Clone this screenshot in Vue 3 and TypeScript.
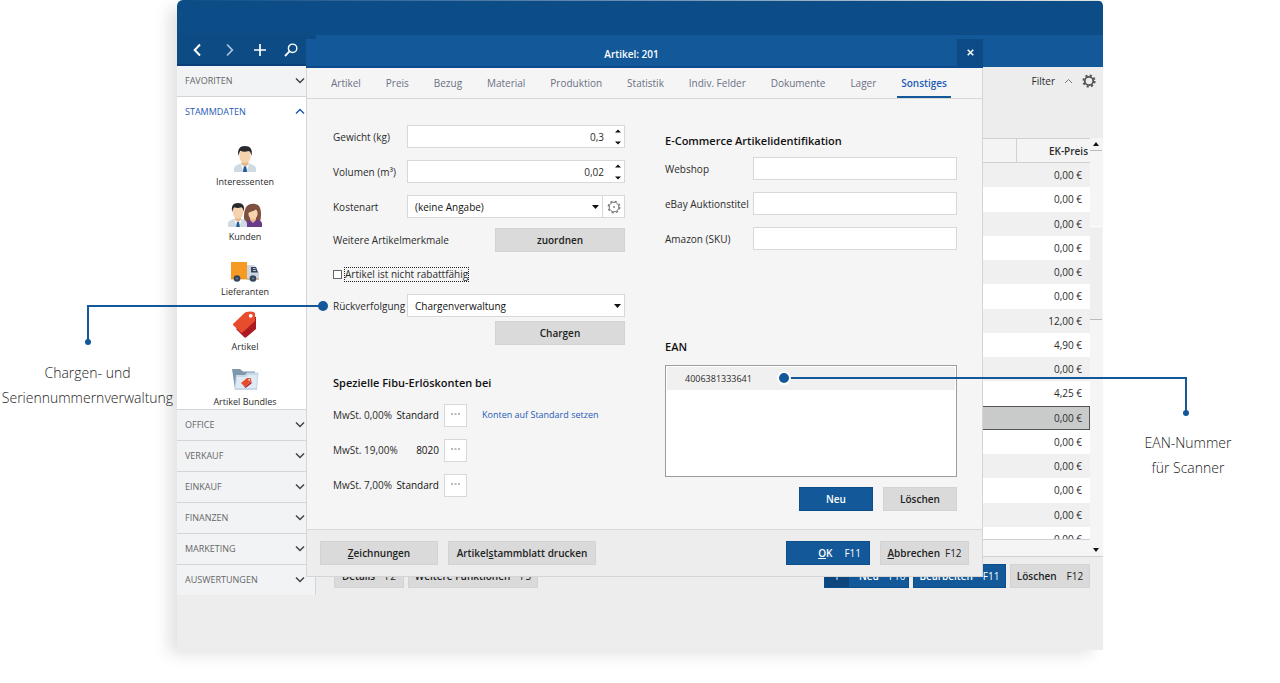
<script setup lang="ts">
import { ref } from 'vue'

interface TaxRow {
  label: string
  account: string
}

const tabs: string[] = ['Artikel', 'Preis', 'Bezug', 'Material', 'Produktion', 'Statistik', 'Indiv. Felder', 'Dokumente', 'Lager', 'Sonstiges']
const activeTab = ref('Sonstiges')
const groups: string[] = ['OFFICE', 'VERKAUF', 'EINKAUF', 'FINANZEN', 'MARKETING', 'AUSWERTUNGEN']
const prices: string[] = ['0,00', '0,00', '0,00', '0,00', '0,00', '0,00', '12,00', '4,90', '0,00', '4,25', '0,00', '0,00', '0,00', '0,00', '0,00', '0,00']
const selectedRow = 10
const taxRows: TaxRow[] = [
  { label: 'MwSt. 0,00%', account: 'Standard' },
  { label: 'MwSt. 19,00%', account: '8020' },
  { label: 'MwSt. 7,00%', account: 'Standard' },
]
const shopFields: { id: string; label: string }[] = [
  { id: 'webshop', label: 'Webshop' },
  { id: 'ebay', label: 'eBay Auktionstitel' },
  { id: 'amazon', label: 'Amazon (SKU)' },
]
const weight = ref('0,3')
const volume = ref('0,02')
const noDiscount = ref(false)
</script>

<template>
  <div class="stage">
    <div class="window">
      <header class="topbar"></header>
      <div class="columns">
        <aside class="sidebar">
          <div class="nav-tools">
            <button type="button" aria-label="Zurück"><svg width="14" height="14" viewBox="0 0 14 14"><path d="M9 1.5 3.7 7 9 12.5" stroke="#fff" stroke-width="2" fill="none" /></svg></button>
            <button type="button" aria-label="Vor"><svg width="14" height="14" viewBox="0 0 14 14"><path d="M5 1.5 10.3 7 5 12.5" stroke="#a9c2da" stroke-width="1.8" fill="none" /></svg></button>
            <button type="button" aria-label="Hinzufügen"><svg width="14" height="14" viewBox="0 0 14 14"><path d="M7 1v12M1 7h12" stroke="#fff" stroke-width="1.7" fill="none" /></svg></button>
            <button type="button" aria-label="Suchen"><svg width="14" height="14" viewBox="0 0 14 14"><circle cx="8.6" cy="5.3" r="4.2" stroke="#fff" stroke-width="1.4" fill="none" /><path d="M5.5 8.4 1 13" stroke="#fff" stroke-width="1.8" /></svg></button>
          </div>
          <button type="button" class="group">FAVORITEN
            <svg width="10" height="7" viewBox="0 0 10 7"><path d="M1 1.5 5 5.5 9 1.5" stroke="#444" stroke-width="1.5" fill="none" /></svg>
          </button>
          <section class="open-group">
            <button type="button" class="group active">STAMMDATEN
              <svg width="10" height="7" viewBox="0 0 10 7"><path d="M1 5.5 5 1.5 9 5.5" stroke="#1f5bb5" stroke-width="1.5" fill="none" /></svg>
            </button>
            <nav class="entries">
              <a href="#">
                <svg width="24" height="28" viewBox="0 0 24 28">
                  <path d="M1 27v-3c0-3 3-4.200 7-5.500h8c4 1.300 7 2.500 7 5.500v3z" fill="#cfdbe2" />
                  <path d="M8.500 15h7v4.500L12 22l-3.500-2.500z" fill="#e6b98f" />
                  <path d="M8 19l4 3-2.500 2.500zM16 19l-4 3 2.500 2.500z" fill="#fff" />
                  <path d="M10.800 21.500h2.400l.8 5.500h-4z" fill="#23599b" />
                  <ellipse cx="12" cy="11" rx="5.700" ry="7" fill="#f6d3ae" />
                  <path d="M5.500 11C4 4 7 1 12 1s8 3 6.500 10c-.6-3-1.500-4.500-3-5-3 1-6 .8-8-.2C6.500 7 6 9 5.500 11z" fill="#29292c" />
                </svg>
                <span>Interessenten</span>
              </a>
              <a href="#">
                <svg width="34" height="28" viewBox="0 0 34 28">
                  <path d="M17 22c-2-4-1-13 2-16 3-3 9-3 12 0 3 4 2 12 1 16z" fill="#80503e" />
                  <path d="M17 27v-3c0-3 3-4 5-4.500h6c3 .5 6 1.500 6 4.500v3z" fill="#6a3b8b" />
                  <path d="M22 17h6v3l-3 3-3-3z" fill="#e6b98f" />
                  <ellipse cx="25" cy="13.500" rx="4.600" ry="5.800" fill="#f6d3ae" />
                  <path d="M19.500 13.500c0-6 5-6 9-8 2 2 2.500 5 2.500 8-1-2-2-3.500-3-4-3 2-6 2-8.500 4z" fill="#80503e" />
                  <path d="M0 27v-3c0-3 3-4.200 6-5h8c3 .8 5 2 5 5v3z" fill="#cfdbe2" />
                  <path d="M7 15h6v5l-3 2-3-2z" fill="#e6b98f" />
                  <path d="M6.500 19.500l3.500 3-2 2zM13.500 19.500l-3.500 3 2 2z" fill="#fff" />
                  <path d="M9 22h2l.8 5H8.200z" fill="#23599b" />
                  <ellipse cx="10" cy="12" rx="5.200" ry="6.600" fill="#f6d3ae" />
                  <path d="M4.200 12C3 6 5 3 10 3s7 3 5.800 9c-.5-3-1.400-4.200-2.600-4.700-2.500 1-5 .8-6.900-.1C5.200 8.500 4.700 10 4.200 12z" fill="#29292c" />
                </svg>
                <span>Kunden</span>
              </a>
              <a href="#">
                <svg width="28" height="28" viewBox="0 0 28 28">
                  <path d="M16 10h7l5 7v8H16z" fill="#ccd6df" />
                  <path d="M20 12h5l2 5.500h-7z" fill="#35435c" />
                  <path d="M22 13.500h2.500M22 15.500h3" stroke="#d9e2ea" stroke-width=".8" />
                  <path d="M0 7h16v17H0z" fill="#f59b24" />
                  <path d="M0 23h28v2H0z" fill="#d8861d" opacity=".3" />
                  <circle cx="6" cy="23.500" r="3.300" fill="#35435c" /><circle cx="6" cy="23.500" r="1.100" fill="#71819b" />
                  <circle cx="22" cy="23.500" r="3.300" fill="#35435c" /><circle cx="22" cy="23.500" r="1.100" fill="#71819b" />
                </svg>
                <span>Lieferanten</span>
              </a>
              <a href="#">
                <svg width="26" height="28" viewBox="0 0 26 28">
                  <path d="M4 19 19 6l5 1v12L14 27.500q-1 .5-2-.5z" fill="#ab1a23" />
                  <path d="M1 14 13 2.500Q18 .800 22 2l1 1.500v7.500L10.500 22.500Q9.500 23 8.500 22L1 15z" fill="#e74d2d" />
                  <circle cx="18.700" cy="5.800" r="1.900" fill="#fff" />
                </svg>
                <span>Artikel</span>
              </a>
              <a href="#">
                <svg width="28" height="28" viewBox="0 0 28 28">
                  <path d="M1 4h8l3 2.500h12V24H4z" fill="#8098ae" />
                  <path d="M5 10h9l2-2.500h11.500L26 25H3.500z" fill="#c8d8e7" />
                  <path d="M6 12h9l2-2h9l-1 13H5z" fill="#dfebf4" />
                  <path d="M10 18l6-5 4 .3.200 3.200L14 22z" fill="#e74d2d" />
                  <path d="M12 20.500l2 1.500 6.500-5.500v2L14.500 23z" fill="#ab1a23" />
                  <circle cx="18.200" cy="14.900" r=".8" fill="#fff" />
                </svg>
                <span>Artikel Bundles</span>
              </a>
            </nav>
          </section>
          <button v-for="g in groups" :key="g" type="button" class="group">{{ g }}
            <svg width="10" height="7" viewBox="0 0 10 7"><path d="M1 1.500 5 5.500 9 1.500" stroke="#444" stroke-width="1.500" fill="none" /></svg>
          </button>
        </aside>

        <main class="main">
          <div class="toolbar"></div>
          <div class="filter">
            <button type="button">Filter
              <svg width="9" height="6" viewBox="0 0 9 6"><path d="M1 5 4.500 1.500 8 5" stroke="#777" stroke-width="1" fill="none" /></svg>
            </button>
            <button type="button" aria-label="Einstellungen">
              <svg width="14" height="14" viewBox="0 0 14 14"><circle cx="7" cy="7" r="5.600" fill="none" stroke="#555" stroke-width="2" stroke-dasharray="2.200 2.200" /><circle cx="7" cy="7" r="4.200" fill="none" stroke="#555" stroke-width="1.800" /></svg>
            </button>
          </div>
          <div class="list">
            <div class="list-body">
              <table>
                <thead><tr><th></th><th class="price">EK-Preis</th></tr></thead>
                <tbody>
                  <tr v-for="(p, i) in prices" :key="i" :class="{ selected: i === selectedRow }"><td></td><td class="price">{{ p }} €</td></tr>
                </tbody>
              </table>
            </div>
            <div class="scroll">
              <button type="button" class="up" aria-label="Nach oben"><svg width="6" height="4" viewBox="0 0 6 4"><path d="M0 4 3 0l3 4z" fill="#111" /></svg></button>
              <div class="thumb"></div>
              <button type="button" class="down" aria-label="Nach unten"><svg width="6" height="4" viewBox="0 0 6 4"><path d="M0 0 3 4l3-4z" fill="#111" /></svg></button>
            </div>
          </div>
          <div class="actions">
            <button type="button" class="btn details">Details <kbd>F2</kbd></button>
            <button type="button" class="btn more">Weitere Funktionen <kbd>F3</kbd></button>
            <span class="spacer"></span>
            <button type="button" class="btn blue new"><i class="plus">+</i><span>Neu</span> <kbd>F10</kbd></button>
            <button type="button" class="btn blue edit">Bearbeiten <kbd>F11</kbd></button>
            <button type="button" class="btn del">Löschen <kbd>F12</kbd></button>
          </div>
        </main>
      </div>

      <section class="dialog" role="dialog" aria-label="Artikel: 201">
        <div class="titlebar">
          <h1>Artikel: 201</h1>
          <button type="button" aria-label="Schließen"><svg width="7" height="7" viewBox="0 0 7 7"><path d="M.7.700l5.600 5.600M6.300.700.7 6.300" stroke="#fff" stroke-width="1.500" /></svg></button>
        </div>
        <div class="tabs">
          <button v-for="t in tabs" :key="t" type="button" :class="{ on: t === activeTab }" @click="activeTab = t">{{ t }}</button>
        </div>
        <div class="body">
          <div class="left">
            <div class="row">
              <label for="weight">Gewicht (kg)</label>
              <div class="box"><input id="weight" v-model="weight" class="num" type="text"><span class="spin">
                <svg width="6" height="16" viewBox="0 0 6 16"><path d="M0 3.500 3 .500l3 3zM0 12.500l3 3 3-3z" fill="#111" /></svg></span></div>
            </div>
            <div class="row">
              <label for="volume">Volumen (m³)</label>
              <div class="box"><input id="volume" v-model="volume" class="num" type="text"><span class="spin">
                <svg width="6" height="16" viewBox="0 0 6 16"><path d="M0 3.500 3 .500l3 3zM0 12.500l3 3 3-3z" fill="#111" /></svg></span></div>
            </div>
            <div class="row">
              <label for="cost">Kostenart</label>
              <div class="box">
                <div class="pick"><select id="cost"><option>(keine Angabe)</option></select><svg width="7" height="4" viewBox="0 0 7 4"><path d="M0 0h7L3.500 4z" fill="#111" /></svg></div>
                <button type="button" class="gear" aria-label="Kostenarten bearbeiten">
                  <svg width="14" height="14" viewBox="0 0 14 14"><circle cx="7" cy="7" r="4.800" fill="none" stroke="#777" stroke-width="1" /><circle cx="7" cy="7" r="5.800" fill="none" stroke="#777" stroke-width="1.200" stroke-dasharray="2.280 2.280" /><circle cx="7" cy="7" r="1" fill="#888" /></svg>
                </button>
              </div>
            </div>
            <div class="row wide">
              <span>Weitere Artikelmerkmale</span>
              <button type="button" class="btn field-btn">zuordnen</button>
            </div>
            <label class="check"><input v-model="noDiscount" type="checkbox"><span>Artikel ist nicht rabattfähig</span></label>
            <div class="row trace">
              <label for="trace">Rückverfolgung</label>
              <div class="box"><div class="pick"><select id="trace"><option>Chargenverwaltung</option></select><svg width="7" height="4" viewBox="0 0 7 4"><path d="M0 0h7L3.500 4z" fill="#111" /></svg></div></div>
            </div>
            <div class="row wide batch"><button type="button" class="btn field-btn">Chargen</button></div>
            <h2 class="accounts">Spezielle Fibu-Erlöskonten bei</h2>
            <div v-for="(r, i) in taxRows" :key="r.label" class="tax">
              <span>{{ r.label }}</span>
              <output>{{ r.account }}</output>
              <button type="button" :aria-label="'Konto wählen ' + r.label"><svg width="9" height="2" viewBox="0 0 9 2"><path d="M0 1h2M3.500 1h2M7 1h2" stroke="#777" stroke-width="1" /></svg></button>
              <a v-if="i === 0" href="#">Konten auf Standard setzen</a>
            </div>
          </div>
          <div class="right">
            <h2>E-Commerce Artikelidentifikation</h2>
            <div v-for="f in shopFields" :key="f.id" class="row shop">
              <label :for="f.id">{{ f.label }}</label>
              <div class="box"><input :id="f.id" type="text"></div>
            </div>
            <h2 class="ean">EAN</h2>
            <ul class="codes"><li>4006381333641</li></ul>
            <div class="code-actions">
              <button type="button" class="btn blue">Neu</button>
              <button type="button" class="btn">Löschen</button>
            </div>
          </div>
        </div>
        <footer>
          <button type="button" class="btn draw"><span><u>Z</u>eichnungen</span></button>
          <button type="button" class="btn print"><span>Artikel<u>s</u>tammblatt drucken</span></button>
          <span class="spacer"></span>
          <button type="button" class="btn blue ok"><span><u>O</u>K</span> <kbd>F11</kbd></button>
          <button type="button" class="btn cancel"><span><u>A</u>bbrechen</span> <kbd>F12</kbd></button>
        </footer>
      </section>
    </div>

    <div class="note note-left">
      <svg width="246" height="46" viewBox="0 0 246 46"><path d="M240 6H5v36" fill="none" stroke="#135898" stroke-width="2" /><circle cx="240" cy="6" r="5" fill="#135898" /><circle cx="5" cy="42" r="3" fill="#135898" /></svg>
      <p>Chargen- und<br>Seriennummernverwaltung</p>
    </div>
    <div class="note note-right">
      <svg width="414" height="46" viewBox="0 0 414 46"><path d="M8 8h402v34" fill="none" stroke="#135898" stroke-width="2" /><circle cx="8" cy="8" r="6" fill="#135898" stroke="#fff" stroke-width="2" /><circle cx="410" cy="43" r="3" fill="#135898" /></svg>
      <p>EAN-Nummer<br>für Scanner</p>
    </div>
  </div>
</template>

<style>
body { margin: 0; background: #fff; }
</style>

<style scoped>
* { box-sizing: border-box; }
.stage {
  position: relative;
  padding: 0 177px 33px;
  overflow: hidden;
  font: 10px/14px "Open Sans", "Noto Sans", sans-serif;
  color: #2b2b2b;
}
button, input, select { font: inherit; color: inherit; margin: 0; padding: 0; border: 0; background: none; outline: 0; }
button { display: flex; align-items: center; justify-content: center; cursor: pointer; white-space: nowrap; }
svg { display: block; flex: none; }
a { text-decoration: none; color: inherit; }
kbd { font: inherit; font-weight: 400; }
h1, h2, p, ul { margin: 0; padding: 0; }

.window {
  position: relative;
  min-height: 650px;
  background: #ededed;
  border-radius: 6px 6px 0 0;
  box-shadow: -10px 6px 16px -2px rgba(0, 0, 0, .12);
}
.topbar {
  height: 35px;
  border-radius: 6px 6px 0 0;
  background: linear-gradient(90deg, #0c4d87, #6d90b5 50%, #e0e4e4) top / 100% 1px no-repeat, #0c4d87;
}
.columns { display: flex; align-items: flex-start; }
.sidebar { flex: none; width: 139px; border-right: 1px solid #d3d5d8; background: #f2f3f5; }
.nav-tools {
  display: flex;
  gap: 17px;
  height: 31px;
  margin-right: -1px;
  padding: 0 14px;
  background: #0d4b84;
  border-bottom: 2px solid #0a4079;
}
.group {
  justify-content: space-between;
  width: 100%;
  height: 31px;
  padding: 0 10px 1px 8px;
  color: #666;
  border-top: 1px solid #d3d5d8;
  font-size: 9px;
}
.nav-tools + .group { height: 30px; border-top: 0; }
.open-group { height: 313px; background: #fff; border-top: 1px solid #d3d5d8; overflow: hidden; }
.group.active { height: 30px; border: 0; color: #1f5bb5; }
.entries { padding: 18px 2px 0 0; }
.entries a { display: flex; flex-direction: column; align-items: center; height: 55px; gap: 2px; font-size: 9px; }

.main { flex: 1; min-width: 0; }
.toolbar { height: 32px; background: #135898; }
.filter { display: flex; justify-content: flex-end; align-items: flex-start; gap: 9px; height: 71px; padding: 7px 7px 0 0; }
.filter button { height: 14px; gap: 9px; }
.list { display: flex; height: 419px; border-bottom: 1px solid #d0d0d0; background: #f5f5f6; }
.list-body { flex: 1; height: 402px; overflow: hidden; border-top: 1px solid #d0d0d0; border-bottom: 1px solid #ccd0d2; }
table { width: 100%; height: 412px; border-spacing: 0; table-layout: fixed; }
th { height: 24px; padding: 0; background: #f4f4f4; border-bottom: 1px solid #d0d0d0; font-weight: 600; }
th.price { width: 74px; border-left: 1px solid #d0d0d0; padding-right: 2px; }
td { padding: 0; background: #fff; }
tbody tr:nth-child(odd) td { background: #f0f0f0; }
.price { text-align: right; }
td.price { padding-right: 8px; }
tbody tr.selected:nth-child(n) td { background: #c9cbcb; box-shadow: inset 0 1px #555, inset 0 -1px #555; }
tbody tr.selected:nth-child(n) td.price { box-shadow: inset 0 1px #555, inset -1px -1px #555; }
.scroll { display: flex; flex-direction: column; width: 13px; background: #f5f5f6; }
.scroll button { height: 13px; width: 12px; border-bottom: 1px solid #bbb; }
.scroll .up { margin-bottom: 75px; }
.thumb { height: 94px; width: 12px; background: #efefef; border-top: 1px solid #fff; border-bottom: 1px solid #bbb; }
.scroll .down { margin-top: auto; height: 12px; border: 0; }
.actions { display: flex; gap: 4px; padding: 7px 13px 0 18px; }
.spacer { flex: 1; }

.btn { height: 24px; background: #dadada; border: 1px solid #d3d3d3; font-weight: 600; color: #222; }
.blue { background: #135898; border-color: #0c4d8c; color: #fff; }
.details { width: 70px; gap: 10px; }
.more { width: 130px; gap: 10px; }
.new { width: 85px; justify-content: flex-start; gap: 10px; }
.plus { width: 24px; height: 22px; background: #0c467d; font: 300 18px/20px "Open Sans", sans-serif; }
.edit { width: 93px; gap: 10px; }
.del { width: 80px; gap: 10px; }

.dialog {
  position: absolute;
  top: 39px;
  left: 129px;
  right: 120px;
  background: #f5f5f5;
  border: 1px solid #d5d5d5;
  border-top: 0;
}
.titlebar { display: flex; height: 29px; margin: 0 -1px; background: #135898; border-bottom: 2px solid #0c4a8d; }
.titlebar h1 { flex: 1; text-align: center; font-size: 10px; line-height: 30px; font-weight: 600; color: #fff; }
.titlebar button { width: 26px; background: #0c4b85; }
.tabs { display: flex; justify-content: space-between; height: 31px; padding: 0 31px 0 20px; border-bottom: 1px solid #d8d8d8; }
.tabs button { padding: 2px 4px 0; color: #6b7185; border-bottom: 2px solid transparent; }
.tabs .on { color: #1f5bb5; border-color: #135898; font-weight: 600; }
.body { display: grid; grid-template-columns: 1fr 1fr; column-gap: 40px; height: 430px; padding: 26px 25px 0 26px; }
.row { display: flex; align-items: center; height: 23px; margin-bottom: 12px; }
.row label { flex: none; width: 74px; white-space: nowrap; }
.box { display: flex; flex: 1; min-width: 0; height: 23px; background: #fff; border: 1px solid #d8d8d8; }
.box input { flex: 1; min-width: 0; }
.num { text-align: right; }
.spin { display: grid; place-items: center; width: 12px; margin-left: 8px; }
.pick { display: grid; flex: 1; align-items: center; }
.pick > * { grid-area: 1 / 1; }
.pick select { appearance: none; height: 21px; padding-left: 7px; color: #111; }
.pick svg { justify-self: end; margin-right: 3px; pointer-events: none; }
.gear { width: 22px; border-left: 1px solid #d8d8d8; }
.wide { justify-content: space-between; height: 24px; margin: -2px 0 15px; }
.field-btn { width: 130px; }
.check { display: flex; align-items: center; gap: 2px; width: max-content; height: 15px; }
.check input { appearance: none; width: 9px; height: 9px; background: #fff; border: 1px solid #666; }
.check span { border: 1px dotted #222; line-height: 13px; }
.trace { margin: 12px 0 4px; }
.batch { justify-content: flex-end; margin: 0; }
h2 { font-size: 11px; line-height: 18px; font-weight: 600; color: #111; white-space: nowrap; }
.accounts { margin: 29px 0 12px; }
.tax { display: flex; align-items: center; height: 22px; margin-bottom: 13px; white-space: nowrap; }
.tax span { width: 60px; }
.tax output { width: 46px; text-align: right; color: #111; }
.tax button { width: 23px; height: 23px; margin-left: 5px; padding-bottom: 3px; background: #fff; border: 1px solid #d8d8d8; }
.tax a { margin-left: 15px; font-size: 9px; color: #1f5bb5; }
.right { padding-top: 7px; }
.right h2 { margin-bottom: 7px; }
.right .shop label { width: 88px; }
.right .ean { margin: 88px 0 9px; }
.codes { height: 112px; padding: 1px; list-style: none; background: #fff; border: 1px solid #999ca2; }
.codes li { height: 23px; padding-left: 18px; font-size: 9px; line-height: 23px; background: #f0f0f0; }
.code-actions { display: flex; justify-content: flex-end; gap: 10px; margin-top: 10px; }
.code-actions .btn { width: 74px; }
footer { display: flex; align-items: flex-start; gap: 10px; height: 47px; padding: 11px 13px 0; background: #ededed; border-top: 1px solid #d8d8d8; }
.draw { width: 118px; }
.print { width: 148px; }
.ok { width: 84px; gap: 12px; justify-content: flex-end; padding-right: 8px; }
.cancel { width: 89px; gap: 5px; }

.note { position: absolute; color: #1c1c1c; }
.note p { font: 300 14px/25px "Open Sans", "Noto Sans", sans-serif; text-align: center; white-space: nowrap; }
.note-left { top: 300px; left: 0; width: 175px; }
.note-left svg { margin-left: 83px; overflow: visible; }
.note-left p { margin-top: 14px; }
.note-right { top: 370px; right: 90px; pointer-events: none; }
.note-right p { width: 190px; margin: 14px -93px 0 auto; }
</style>
